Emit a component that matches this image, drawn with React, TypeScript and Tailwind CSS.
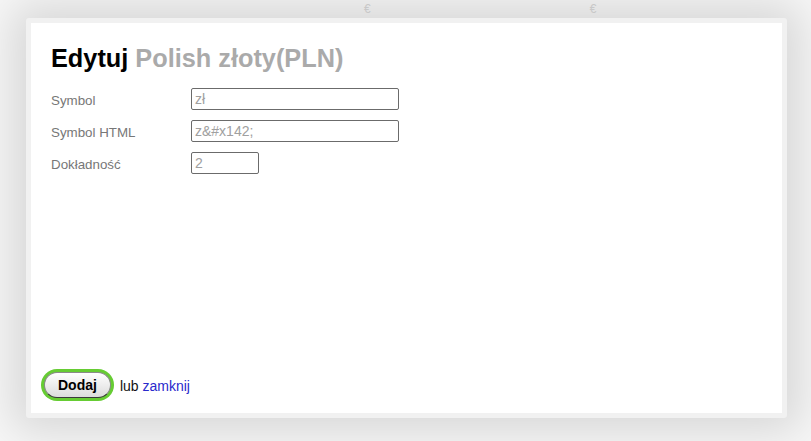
import React from 'react';

const fields = [
  { label: 'Symbol', value: 'zł', width: 'w-[208px]' },
  { label: 'Symbol HTML', value: 'z&#x142;', width: 'w-[208px]' },
  { label: 'Dokładność', value: '2', width: 'w-[68px]' },
];

const App: React.FC = () => {
  return (
    <div className="h-[441px] w-[811px] overflow-hidden bg-[#f7f7f7] font-['Liberation_Sans',Arial,sans-serif]">
      {/* Page behind the modal */}
      <div className="flex h-[18px] items-center gap-[219px] pl-[364px] text-[12px] leading-none text-[#c8c8c8]">
        <span>€</span>
        <span>€</span>
      </div>

      {/* Modal */}
      <div className="ml-[26px] flex h-[400px] w-[761px] flex-col rounded-[3px] border-[5px] border-[#f1f1f1] bg-white shadow-[0_0_45px_14px_rgba(0,0,0,0.13)]">
        <div className="px-[20px] pt-[21px]">
          <h2 className="text-[25.3px] font-bold leading-[29px] text-black">
            Edytuj <span className="text-[#aaaaaa]">Polish złoty(PLN)</span>
          </h2>

          <div className="mt-[15px] flex flex-col gap-[10px]">
            {fields.map((f) => (
              <div key={f.label} className="flex h-[22px] items-center">
                <label className="w-[140px] pt-[3px] text-[13.33px] text-[#777777]">{f.label}</label>
                <input
                  readOnly
                  value={f.value}
                  className={`${f.width} h-[22px] rounded-[2px] border border-[#6b6b6b] px-[3px] text-[14px] text-[#a0a0a0] outline-none`}
                />
              </div>
            ))}
          </div>
        </div>

        <div className="flex-1" />

        {/* Footer */}
        <div className="flex items-center gap-[6px] pb-[12px] pl-[10px] text-[14px]">
          <span className="rounded-full bg-[#66cc33] p-[3px]">
            <button className="flex h-[26px] items-center rounded-full border border-[#8a8a8a] border-b-[#3a3a3a] bg-gradient-to-b from-white to-[#dcdcdc] px-[13px] text-[14px] font-bold text-black">
              Dodaj
            </button>
          </span>
          <span className="pt-[2px] text-[#111]">
            lub <a className="text-[#2a2acc]">zamknij</a>
          </span>
        </div>
      </div>
    </div>
  );
};

export default App;
